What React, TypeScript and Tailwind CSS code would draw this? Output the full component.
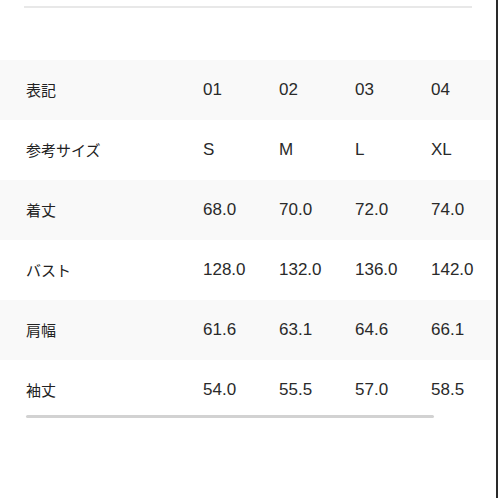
import React from 'react'

const rows = [
  { label: '表記', values: ['01', '02', '03', '04'] },
  { label: '参考サイズ', values: ['S', 'M', 'L', 'XL'] },
  { label: '着丈', values: ['68.0', '70.0', '72.0', '74.0'] },
  { label: 'バスト', values: ['128.0', '132.0', '136.0', '142.0'] },
  { label: '肩幅', values: ['61.6', '63.1', '64.6', '66.1'] },
  { label: '袖丈', values: ['54.0', '55.5', '57.0', '58.5'] },
]

const SizeRow = ({ label, values, shaded }: { label: string; values: string[]; shaded: boolean }) => (
  <div
    className={`grid grid-cols-[177px_76px_76px_76px_1fr] items-center h-[60px] pl-[26px] ${
      shaded ? 'bg-[#f9f9f9]' : 'bg-white'
    }`}
  >
    <span className="text-[15px] text-[#222] font-['Noto_Sans_CJK_JP',sans-serif]">{label}</span>
    {values.map((value, index) => (
      <span key={index} className="text-[17px] text-[#2a2a2a] font-['Liberation_Sans',sans-serif] whitespace-nowrap">
        {value}
      </span>
    ))}
  </div>
)

export default function App() {
  return (
    <div className="flex w-[498px] h-[498px] bg-white overflow-hidden">
      <div className="w-[496px] h-full flex flex-col">
        <div className="px-6 pt-[6px]">
          <div className="h-[2px] bg-[#e8e8e8]" />
        </div>
        <div className="relative mt-[52px]">
          {rows.map((row, index) => (
            <SizeRow key={row.label} label={row.label} values={row.values} shaded={index % 2 === 0} />
          ))}
          <div className="absolute left-[26px] bottom-[2px] w-[408px] h-[3px] rounded-full bg-[#d2d2d2]" />
        </div>
      </div>
      <div className="w-[2px] h-full bg-[#2a2a2a]" />
    </div>
  )
}
